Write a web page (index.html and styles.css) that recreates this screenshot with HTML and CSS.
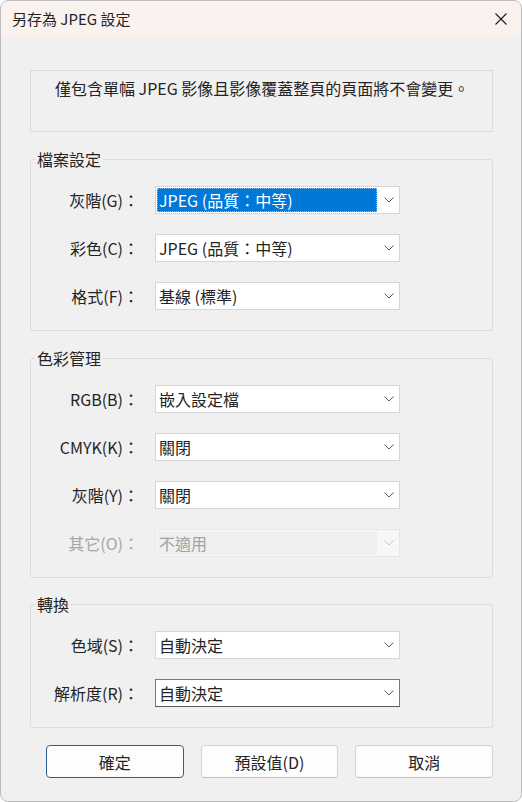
FILE: index.html
```html
<!DOCTYPE html>
<html lang="zh-Hant">
<head>
<meta charset="utf-8">
<title>另存為 JPEG 設定</title>
<link rel="stylesheet" href="styles.css">
</head>
<body>
<div class="window">
  <div class="titlebar">
    <span class="title">另存為 JPEG 設定</span>
    <svg class="close" width="12" height="12" viewBox="0 0 12 12"><path d="M0.5 0.5 L11.5 11.5 M11.5 0.5 L0.5 11.5" stroke="#1a1a1a" stroke-width="1.1" fill="none"/></svg>
  </div>
  <div class="content">
    <div class="info">僅包含單幅 JPEG 影像且影像覆蓋整頁的頁面將不會變更。</div>

    <fieldset class="group">
      <legend>檔案設定</legend>
      <div class="rows">
        <span class="label">灰階(G)：</span>
        <div class="select"><span class="value selected">JPEG (品質：中等)</span><span class="arrow"><svg width="10" height="6" viewBox="0 0 10 6"><path d="M0.5 0.5 L5 5 L9.5 0.5" stroke="#5c5c5c" stroke-width="1" fill="none"/></svg></span></div>
        <span class="label">彩色(C)：</span>
        <div class="select"><span class="value">JPEG (品質：中等)</span><span class="arrow"><svg width="10" height="6" viewBox="0 0 10 6"><path d="M0.5 0.5 L5 5 L9.5 0.5" stroke="#5c5c5c" stroke-width="1" fill="none"/></svg></span></div>
        <span class="label">格式(F)：</span>
        <div class="select"><span class="value">基線 (標準)</span><span class="arrow"><svg width="10" height="6" viewBox="0 0 10 6"><path d="M0.5 0.5 L5 5 L9.5 0.5" stroke="#5c5c5c" stroke-width="1" fill="none"/></svg></span></div>
      </div>
    </fieldset>

    <fieldset class="group">
      <legend>色彩管理</legend>
      <div class="rows">
        <span class="label">RGB(B)：</span>
        <div class="select"><span class="value">嵌入設定檔</span><span class="arrow"><svg width="10" height="6" viewBox="0 0 10 6"><path d="M0.5 0.5 L5 5 L9.5 0.5" stroke="#5c5c5c" stroke-width="1" fill="none"/></svg></span></div>
        <span class="label">CMYK(K)：</span>
        <div class="select"><span class="value">關閉</span><span class="arrow"><svg width="10" height="6" viewBox="0 0 10 6"><path d="M0.5 0.5 L5 5 L9.5 0.5" stroke="#5c5c5c" stroke-width="1" fill="none"/></svg></span></div>
        <span class="label">灰階(Y)：</span>
        <div class="select"><span class="value">關閉</span><span class="arrow"><svg width="10" height="6" viewBox="0 0 10 6"><path d="M0.5 0.5 L5 5 L9.5 0.5" stroke="#5c5c5c" stroke-width="1" fill="none"/></svg></span></div>
        <span class="label disabled">其它(O)：</span>
        <div class="select disabled"><span class="value">不適用</span><span class="arrow"><svg width="10" height="6" viewBox="0 0 10 6"><path d="M0.5 0.5 L5 5 L9.5 0.5" stroke="#c4c4c4" stroke-width="1" fill="none"/></svg></span></div>
      </div>
    </fieldset>

    <fieldset class="group last">
      <legend>轉換</legend>
      <div class="rows">
        <span class="label">色域(S)：</span>
        <div class="select"><span class="value">自動決定</span><span class="arrow"><svg width="10" height="6" viewBox="0 0 10 6"><path d="M0.5 0.5 L5 5 L9.5 0.5" stroke="#5c5c5c" stroke-width="1" fill="none"/></svg></span></div>
        <span class="label">解析度(R)：</span>
        <div class="select focused"><span class="value">自動決定</span><span class="arrow"><svg width="10" height="6" viewBox="0 0 10 6"><path d="M0.5 0.5 L5 5 L9.5 0.5" stroke="#5c5c5c" stroke-width="1" fill="none"/></svg></span></div>
      </div>
    </fieldset>

    <div class="buttons">
      <button class="btn default">確定</button>
      <button class="btn">預設值(D)</button>
      <button class="btn">取消</button>
    </div>
  </div>
</div>
</body>
</html>
```
FILE: styles.css
```css
* { box-sizing: border-box; }
html, body { margin: 0; background: #ffffff; }
body {
  font-family: "Noto Sans CJK TC", "Noto Sans", "Liberation Sans", sans-serif;
  color: #242424;
}
.window {
  width: 522px;
  height: 802px;
  border: 1px solid #bcbcbc;
  border-radius: 8px;
  background: #f0f0f0;
  overflow: hidden;
  display: flex;
  flex-direction: column;
}
.titlebar {
  height: 36px;
  flex: none;
  background: #f9f2ef;
  display: flex;
  align-items: center;
  justify-content: space-between;
  padding: 0 14px 0 11px;
  font-size: 15px;
}
.title { line-height: 20px; }
.close { display: block; }
.content {
  padding: 33px 28px 0 29px;
  display: flex;
  flex-direction: column;
}
.info {
  height: 62px;
  border: 1px solid #dadada;
  padding: 6px 0 0 24px;
  font-size: 16px;
  line-height: 22px;
}
.group {
  margin: 18px 0 0;
  padding: 0;
  border: 1px solid #dcdcdc;
  border-radius: 3px;
  min-width: 0;
}
.group legend {
  margin-left: 4px;
  padding: 0 2px;
  font-size: 16px;
  line-height: 18px;
}
.group.last { margin-top: 17px; }
.rows {
  display: grid;
  grid-template-columns: 108px 245px;
  column-gap: 16px;
  row-gap: 20px;
  padding: 18px 0 20px;
  align-items: center;
}
.label {
  text-align: right;
  font-size: 16px;
  line-height: 20px;
  white-space: nowrap;
}
.label.disabled { color: #a6a6a6; }
.select {
  height: 28px;
  background: #ffffff;
  border: 1px solid #d6d6d6;
  display: flex;
  align-items: stretch;
  font-size: 16px;
}
.value {
  flex: 1;
  margin: 1px 2px 1px 1px;
  padding-left: 2px;
  display: flex;
  align-items: center;
  white-space: nowrap;
}
.value.selected {
  background: #0078d7;
  color: #ffffff;
  outline: 1px dotted #8fbde8;
  outline-offset: -1px;
}
.arrow {
  width: 20px;
  display: flex;
  align-items: center;
  justify-content: center;
}
.arrow svg { display: block; }
.select.disabled {
  background: #f7f7f7;
  border-color: #e6e6e6;
}
.select.disabled .value {
  background: #efefef;
  color: #a3a3a3;
}
.select.focused {
  border-color: #7a7a7a;
  border-bottom-color: #5a5a5a;
}
.buttons {
  display: flex;
  gap: 17px;
  margin-top: 17px;
  padding-left: 16px;
}
.btn {
  width: 138px;
  height: 33px;
  background: #fdfdfd;
  border: 1px solid #d3d3d3;
  border-bottom-color: #c2c2c2;
  border-radius: 4px;
  font: inherit;
  font-size: 16px;
  color: #242424;
  display: flex;
  align-items: center;
  justify-content: center;
  padding: 0;
}
.btn.default { border-color: #2f5f91; }
```
